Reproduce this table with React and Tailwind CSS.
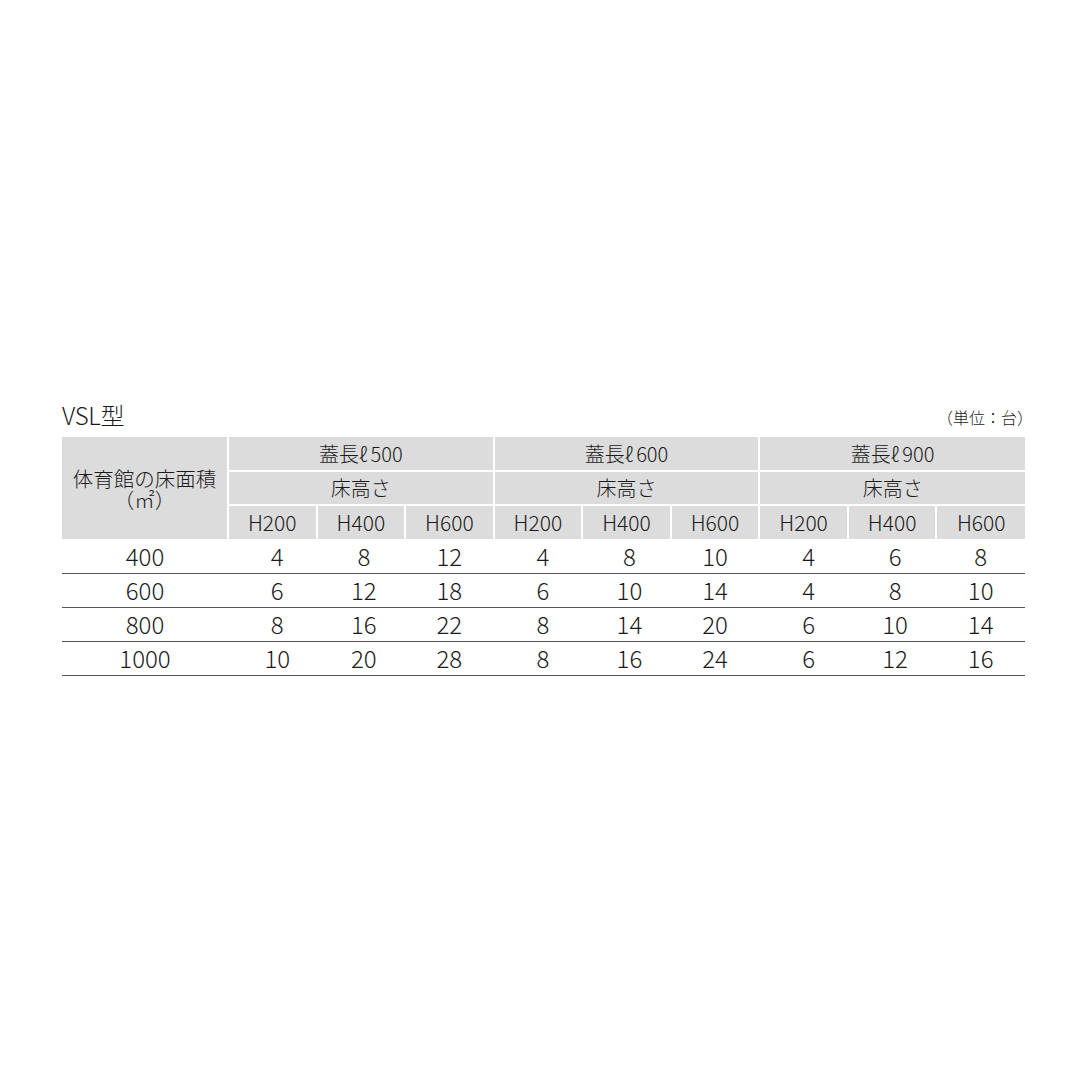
import React from 'react';

const groups = ['500', '600', '900'];
const heights = ['H200', 'H400', 'H600'];

const rows = [
    { area: '400', values: [4, 8, 12, 4, 8, 10, 4, 6, 8] },
    { area: '600', values: [6, 12, 18, 6, 10, 14, 4, 8, 10] },
    { area: '800', values: [8, 16, 22, 8, 14, 20, 6, 10, 14] },
    { area: '1000', values: [10, 20, 28, 8, 16, 24, 6, 12, 16] },
];

// 各グループ内の列ごとの微調整（元図の数字位置に合わせる）
const cellPad = ['pl-[10px]', 'pl-[6px]', 'pl-0'];

export default function App() {
    return (
        <div
            className="w-[1080px] h-[1080px] bg-white text-[#1a1a1a] pt-[398px] px-[62px] font-light"
            style={{ fontFamily: '"Noto Sans CJK JP", "Noto Sans", sans-serif' }}
        >
            {/* タイトル行 */}
            <div className="flex items-end justify-between w-[963px] h-[32px]">
                <span className="text-[24px] leading-none tracking-[-0.3px] pb-[3px]">VSL型</span>
                <span className="text-[16px] leading-none mr-[-8px] pb-[5px]">（単位：台）</span>
            </div>

            <table className="w-[963px] border-collapse table-fixed mt-[7px]">
                <colgroup>
                    <col className="w-[166px]" />
                    {Array.from({ length: 9 }).map((_, i) => (
                        <col key={i} />
                    ))}
                </colgroup>
                <thead className="bg-[#dcdcdc] text-[20px]">
                    <tr className="h-[34px]">
                        <th
                            rowSpan={3}
                            className="font-light border-r-2 border-white align-middle text-[20.5px] leading-[21px] pt-[2px]"
                        >
                            体育館の床面積
                            <br />
                            （㎡）
                        </th>
                        {groups.map((g, i) => (
                            <th
                                key={g}
                                colSpan={3}
                                className={`font-light border-b-2 border-white ${i < 2 ? 'border-r-2' : ''}`}
                            >
                                蓋長ℓ<span className="ml-[3px]">{g}</span>
                            </th>
                        ))}
                    </tr>
                    <tr className="h-[34px]">
                        {groups.map((g, i) => (
                            <th
                                key={g}
                                colSpan={3}
                                className={`font-light border-b-2 border-white ${i < 2 ? 'border-r-2' : ''}`}
                            >
                                床高さ
                            </th>
                        ))}
                    </tr>
                    <tr className="h-[34px]">
                        {groups.map((g, gi) =>
                            heights.map((h, hi) => (
                                <th
                                    key={g + h}
                                    className={`font-light text-[21px] border-white ${gi * 3 + hi < 8 ? 'border-r-2' : ''}`}
                                >
                                    {h}
                                </th>
                            ))
                        )}
                    </tr>
                </thead>
                <tbody className="text-[24px]">
                    {rows.map((r) => (
                        <tr key={r.area} className="h-[34px] border-b border-[#555]">
                            <td className="text-center leading-none">{r.area}</td>
                            {r.values.map((v, i) => (
                                <td key={i} className={`text-center leading-none ${cellPad[i % 3]}`}>
                                    {v}
                                </td>
                            ))}
                        </tr>
                    ))}
                </tbody>
            </table>
        </div>
    );
}
